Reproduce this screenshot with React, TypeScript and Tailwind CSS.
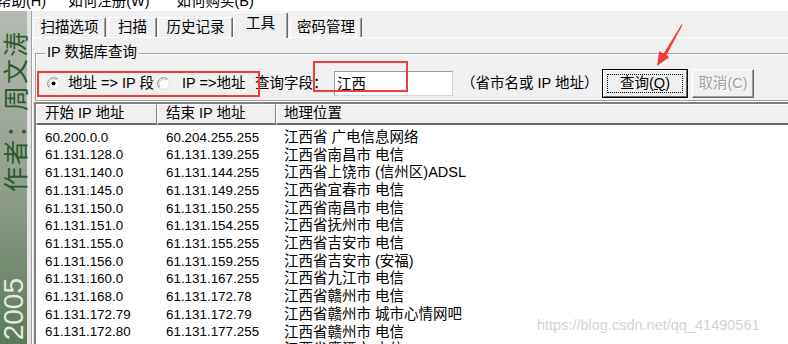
import React from 'react';

const FONT = "font-['Liberation_Sans','Noto_Sans_CJK_SC',sans-serif]";

const rows: [string, string, string][] = [
    ['60.200.0.0', '60.204.255.255', '江西省 广电信息网络'],
    ['61.131.128.0', '61.131.139.255', '江西省南昌市 电信'],
    ['61.131.140.0', '61.131.144.255', '江西省上饶市 (信州区)ADSL'],
    ['61.131.145.0', '61.131.149.255', '江西省宜春市 电信'],
    ['61.131.150.0', '61.131.150.255', '江西省南昌市 电信'],
    ['61.131.151.0', '61.131.154.255', '江西省抚州市 电信'],
    ['61.131.155.0', '61.131.155.255', '江西省吉安市 电信'],
    ['61.131.156.0', '61.131.159.255', '江西省吉安市 (安福)'],
    ['61.131.160.0', '61.131.167.255', '江西省九江市 电信'],
    ['61.131.168.0', '61.131.172.78', '江西省赣州市 电信'],
    ['61.131.172.79', '61.131.172.79', '江西省赣州市 城市心情网吧'],
    ['61.131.172.80', '61.131.177.255', '江西省赣州市 电信'],
    ['61.131.178.0', '61.131.179.255', '江西省鹰潭市 电信']
];

const Radio = ({ checked }: { checked?: boolean }) => (
    <svg width="13" height="13" viewBox="0 0 13 13" className="shrink-0">
        <circle cx="6.5" cy="6.5" r="6" fill="#fff" />
        <path d="M2.26 10.74 A6 6 0 0 1 10.74 2.26" fill="none" stroke="#888" />
        <path d="M10.74 2.26 A6 6 0 0 1 2.26 10.74" fill="none" stroke="#e0e0e0" />
        <path d="M3 10 A5 5 0 0 1 10 3" fill="none" stroke="#c4c4c4" />
        {checked && <circle cx="6.5" cy="6.5" r="2" fill="#000" />}
    </svg>
);

const tabBase = 'flex items-center justify-center bg-[#f0f0f0] border-t border-l border-r border-t-white border-l-white border-r-[#696969] rounded-t-[2px] shadow-[inset_-1px_0_0_#a0a0a0] text-[14.5px] text-black';

export default function App() {
    return (
        <div className={`relative w-[788px] h-[344px] overflow-hidden bg-[#f0f0f0] ${FONT}`}>
            {/* menu bar, mostly cut off at the top */}
            <div className="h-[11px] bg-white overflow-hidden">
                <div className="-mt-[7px] flex leading-[16px] text-[14.5px] text-black whitespace-nowrap">
                    <span className="-ml-[3px]">帮助(H)</span>
                    <span className="ml-[22px]">如何注册(W)</span>
                    <span className="ml-[27px]">如何购买(B)</span>
                </div>
            </div>

            <div className="flex h-[333px]">
                {/* author strip */}
                <div className="w-[27px] shrink-0 flex flex-col items-center bg-[linear-gradient(to_bottom,#b4bab2,#93a08f_50%,#5a7a57)]">
                    <div className="mt-[19px] rotate-180 [writing-mode:vertical-rl] [text-orientation:sideways] text-[25px] leading-[26px] tracking-[2px] text-[#2d5a2b] font-['Noto_Sans_CJK_SC',sans-serif]">
                        作者：周文涛
                    </div>
                    <div className="mt-auto mb-[4px] rotate-180 [writing-mode:vertical-rl] text-[28px] leading-[24px] text-[#e4e9e3] font-['Liberation_Sans',sans-serif]">
                        2005
                    </div>
                </div>
                <div className="w-[5px] shrink-0 bg-[#e2e2e2] border-r border-[#a0a0a0]" />

                {/* window content */}
                <div className="flex-1 flex flex-col min-w-0">
                    <div className="h-[26px] flex items-end shrink-0">
                        <div className={`${tabBase} ml-[1px] w-[73px] h-[20px]`}>扫描选项</div>
                        <div className={`${tabBase} ml-[2px] w-[49px] h-[20px]`}>扫描</div>
                        <div className={`${tabBase} ml-[1px] w-[75px] h-[20px]`}>历史记录</div>
                        <div className={`${tabBase} relative z-10 -mb-px w-[55px] h-[26px] pb-[3px]`}>工具</div>
                        <div className={`${tabBase} ml-[2px] w-[72px] h-[20px]`}>密码管理</div>
                    </div>

                    <div className="flex-1 border-t border-l border-white flex flex-col">
                        {/* group box */}
                        <div className="ml-[2px] mt-[15px] h-[48px] border border-[#a0a0a0] border-r-0 shadow-[inset_1px_1px_0_#fff,0_1px_0_#fff]">
                            <div className="-mt-[10px] ml-[9px] w-fit px-[2px] bg-[#f0f0f0] leading-[16px] text-[14.5px] text-black whitespace-nowrap">
                                IP 数据库查询
                            </div>
                            <div className="mt-[9px] h-[29px] flex items-center text-[14.5px] text-black whitespace-nowrap">
                                <div className="ml-[11px]"><Radio checked /></div>
                                <span className="ml-[8px] w-[89px]">地址 =&gt; IP 段</span>
                                <Radio />
                                <span className="ml-[12px] w-[62px]">IP =&gt;地址</span>
                                <span className="ml-[11px] w-[79px]">查询字段：</span>
                                <div className="w-[119px] h-[25px] shrink-0 bg-white border border-[#9c9c9c] border-r-[#d8d8d8] border-b-[#d8d8d8] flex items-center pl-[2px] leading-[18px]">
                                    江西
                                </div>
                                <span className="ml-[8px] w-[141px]">（省市名或 IP 地址）</span>
                                <div className="w-[86px] h-[29px] shrink-0 border border-black">
                                    <div className="h-full border border-t-white border-l-white border-r-[#696969] border-b-[#696969] p-[3px]">
                                        <div className="h-full border border-dotted border-black flex items-center justify-center">
                                            查询(<span className="underline">Q</span>)
                                        </div>
                                    </div>
                                </div>
                                <div className="ml-[4px] w-[62px] h-[29px] shrink-0 border border-t-white border-l-white border-r-[#696969] border-b-[#696969] shadow-[inset_-1px_-1px_0_#a0a0a0] flex items-center justify-center text-[#a0a0a0] [text-shadow:1px_1px_0_#fff]">
                                    取消(C)
                                </div>
                            </div>
                        </div>

                        {/* list view */}
                        <div className="ml-[1px] mt-[1px] flex-1 border-t-2 border-l-2 border-t-[#808080] border-l-[#808080] bg-white flex flex-col min-h-0">
                            <div className="h-[21px] shrink-0 flex bg-[#f0f0f0] text-[14.5px] text-black whitespace-nowrap">
                                <div className="w-[121px] shrink-0 pl-[8px] flex items-center border-t border-l border-white border-r border-b-2 border-r-[#808080] border-b-[#696969]">开始 IP 地址</div>
                                <div className="w-[119px] shrink-0 pl-[8px] flex items-center border-t border-l border-white border-r border-b-2 border-r-[#808080] border-b-[#696969]">结束 IP 地址</div>
                                <div className="flex-1 pl-[7px] flex items-center border-t border-l border-white border-b-2 border-b-[#696969]">地理位置</div>
                            </div>
                            <div className="pt-[4px] text-black whitespace-nowrap">
                                {rows.map(([a, b, c]) => (
                                    <div key={a} className="h-[17.7px] flex items-center">
                                        <span className="w-[121px] shrink-0 pl-[9px] text-[13.4px]">{a}</span>
                                        <span className="w-[119px] shrink-0 pl-[9px] text-[13.4px]">{b}</span>
                                        <span className="pl-[8px] text-[14.5px]">{c}</span>
                                    </div>
                                ))}
                            </div>
                        </div>
                    </div>
                </div>
            </div>

            {/* annotations */}
            <div className="absolute left-[37px] top-[71px] w-[223px] h-[26px] border-2 border-[#f23b3b]" />
            <div className="absolute left-[313px] top-[61px] w-[95px] h-[31px] border-2 border-[#f23b3b]" />
            <svg className="absolute left-[640px] top-[20px]" width="50" height="52" viewBox="640 20 50 52">
                <polygon points="682.5,25 681.5,24.5 663,54.5 666,56" fill="#f23b3b" />
                <polygon points="657,66 659.2,50.9 669.4,57.1" fill="#f23b3b" />
            </svg>
            <div className="absolute left-[537px] top-[316px] text-[14.5px] leading-[18px] text-[#d4d4d4] whitespace-nowrap">
                https://blog.csdn.net/qq_41490561
            </div>
        </div>
    );
}
